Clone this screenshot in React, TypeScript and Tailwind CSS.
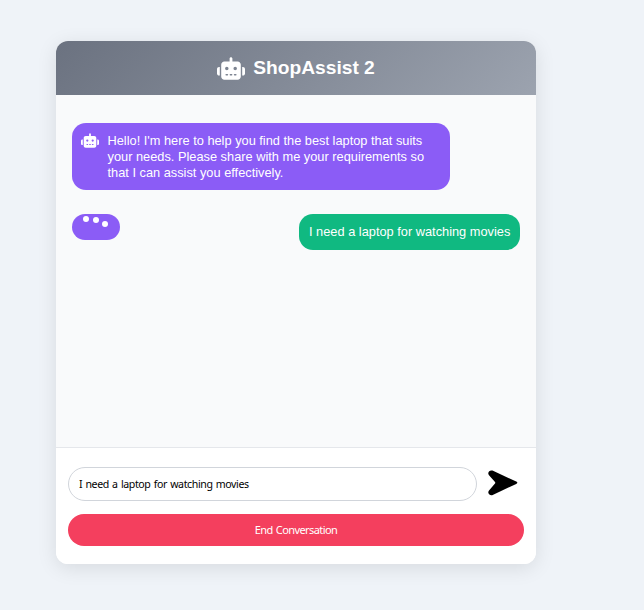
import React from "react";
import { FaRobot } from "react-icons/fa6";

const sans = "font-['Liberation_Sans',Arial,sans-serif]";
const ui = "font-['Noto_Sans',Tahoma,sans-serif]";

function Header() {
  return (
    <header className="flex h-[54px] shrink-0 items-center justify-center gap-2 bg-linear-135 from-[#6b7280] to-[#9ca3af] text-white">
      <FaRobot className="h-[23px] w-[28px]" />
      <h1 className="text-[19.2px] leading-[22px] font-bold">ShopAssist 2</h1>
    </header>
  );
}

function Messages() {
  return (
    <main className="flex flex-1 flex-col gap-6 bg-[#f9fafb] px-4 pt-7 text-[12.8px] leading-4 text-white">
      <div className="flex h-[67px] w-[378px] gap-[8.5px] rounded-[14px] bg-[#8b5cf6] pt-[10px] pl-[9px]">
        <FaRobot className="h-[15px] w-[18px] shrink-0" />
        <p className="whitespace-nowrap">
          Hello! I'm here to help you find the best laptop that suits
          <br />
          your needs. Please share with me your requirements so
          <br />
          that I can assist you effectively.
        </p>
      </div>
      <div className="flex items-start justify-between">
        <div className="flex h-[26px] w-12 gap-[3px] rounded-[14px] bg-[#8b5cf6] pt-[2px] pl-[11px]">
          <span className="size-[6px] rounded-full bg-white" />
          <span className="mt-px ml-px size-[6px] rounded-full bg-white" />
          <span className="mt-[5px] size-[6px] rounded-full bg-white" />
        </div>
        <p className="flex h-9 w-[221px] items-center rounded-[14px] bg-[#10b981] pl-[10px] whitespace-nowrap">
          I need a laptop for watching movies
        </p>
      </div>
    </main>
  );
}

function Footer() {
  return (
    <footer className={`h-[117px] shrink-0 border-t border-[#e5e7eb] bg-white px-3 pt-[19px] text-[11px] ${ui}`}>
      <div className="flex h-[34px] items-center">
        <input
          className="h-[34px] w-[409px] rounded-full border border-[#d1d5db] bg-white px-[10px] text-[10.6px] tracking-[-0.4px] [word-spacing:0.9px] text-black outline-none"
          defaultValue="I need a laptop for watching movies"
        />
        <button aria-label="Send" className="mb-[2px] ml-[11px]">
          <svg className="block h-[26px] w-[30px]" viewBox="0 0 30 26" fill="black">
            <path d="M4.5.6 28.2 11.5Q30.5 12.7 28.2 13.9L4.7 25Q2.8 25.8 1.1 24.2Q-.5 22.4 1 20.4L7 13.6Q7.5 12.8 7 12.1L1 5.2Q-.5 3.2 1 1.4Q2.6-.1 4.5.6Z" />
          </svg>
        </button>
      </div>
      <button className="mt-[13px] flex h-8 w-full items-center justify-center rounded-full bg-[#f43f5e] tracking-[-0.58px] [word-spacing:0.9px] text-white">
        End Conversation
      </button>
    </footer>
  );
}

export default function App() {
  return (
    <div className={`flex h-[610px] w-[644px] items-start bg-[#eff3f8] pt-[41px] pl-14 ${sans}`}>
      <div className="flex h-[523px] w-[480px] flex-col overflow-hidden rounded-xl bg-white shadow-[0_4px_20px_rgba(0,0,0,0.1)]">
        <Header />
        <Messages />
        <Footer />
      </div>
    </div>
  );
}
